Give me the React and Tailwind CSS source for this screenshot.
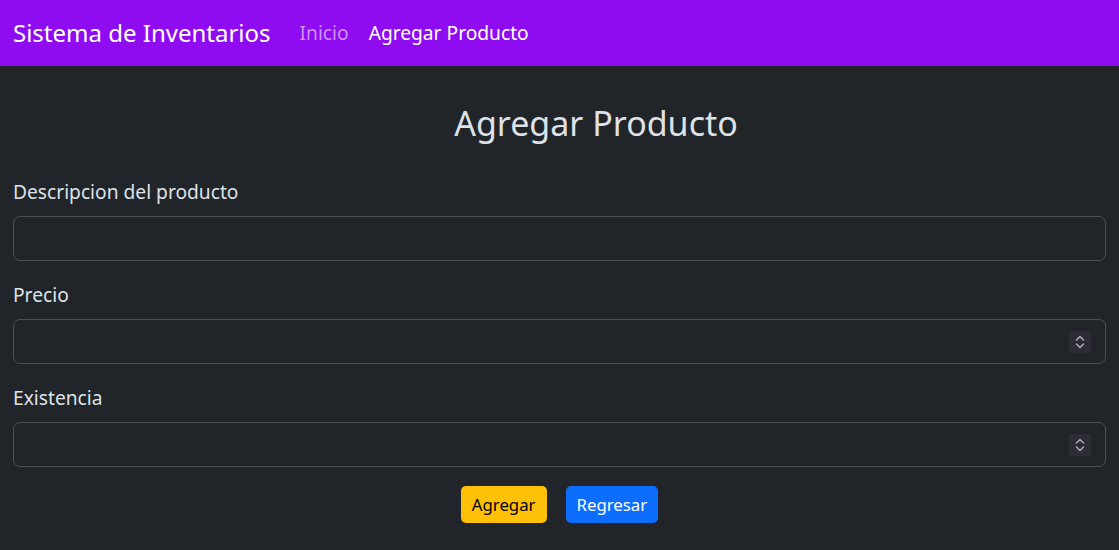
import React from 'react';

const Spinner = () => (
  <div className="absolute right-[15px] top-1/2 -translate-y-1/2 w-[22px] h-[22px] rounded-[2px] bg-[#2d2c34] flex items-center justify-center">
    <svg width="12" height="16" viewBox="0 0 12 16" fill="none" stroke="#a9a8b0" strokeWidth="1.6" strokeLinecap="round" strokeLinejoin="round">
      <path d="M2.5 6 L6 2.5 L9.5 6" />
      <path d="M2.5 10 L6 13.5 L9.5 10" />
    </svg>
  </div>
);

const Field = ({ label, number = false }) => (
  <div className="mb-[19px]">
    <label className="block mb-[10px] text-[19.2px] leading-[29px] text-[#dee2e6]">{label}</label>
    <div className="relative">
      <input
        type="text"
        inputMode={number ? 'numeric' : 'text'}
        className="block w-full h-[45px] px-[15px] rounded-[7px] border border-[#495057] bg-[#212529] text-[#dee2e6] text-[19.2px] focus:outline-none"
      />
      {number && <Spinner />}
    </div>
  </div>
);

export default function App() {
  return (
    <div className="min-h-[550px] bg-[#212529] font-['Noto_Sans',sans-serif] text-[#dee2e6]">
      {/* Navbar */}
      <nav className="h-[66px] bg-[#8f0cf1] flex items-center px-[13px]">
        <span className="text-[24px] text-white mr-[29px]">Sistema de Inventarios</span>
        <a className="text-[19.2px] text-[#cc91f8] mr-[20px]">Inicio</a>
        <a className="text-[19.2px] text-white">Agregar Producto</a>
      </nav>

      {/* Form */}
      <div className="px-[13px]">
        <h3 className="text-center text-[34px] leading-[40px] pt-[37px] pl-[73px] mb-[34px]">Agregar Producto</h3>
        <Field label="Descripcion del producto" />
        <Field label="Precio" number />
        <Field label="Existencia" number />
        <div className="flex justify-center gap-[19px]">
          <button className="h-[37px] px-[11px] rounded-[5px] bg-[#ffc107] text-black text-[16.8px]">Agregar</button>
          <button className="h-[37px] px-[11px] rounded-[5px] bg-[#0d6efd] text-white text-[16.8px]">Regresar</button>
        </div>
      </div>
    </div>
  );
}
